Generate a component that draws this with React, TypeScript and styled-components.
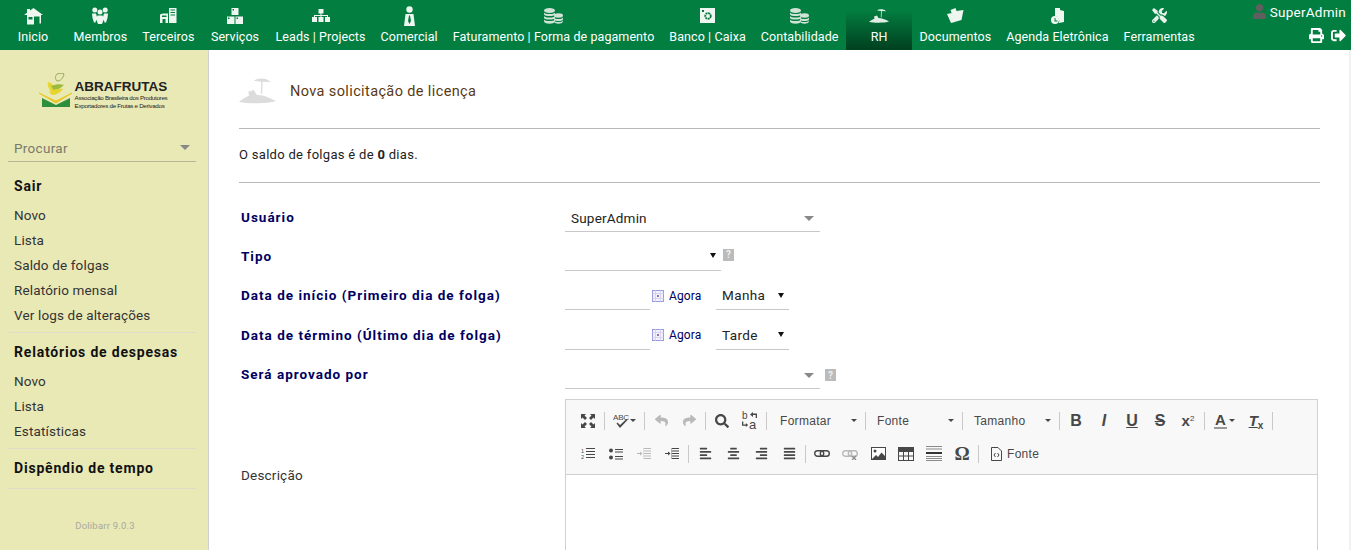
import React from 'react';
import styled, { createGlobalStyle } from 'styled-components';
import {
  FaAlignCenter, FaAlignJustify, FaAlignLeft, FaAlignRight, FaPrint, FaReply, FaSearch, FaShare,
  FaSignOutAlt, FaTools, FaUser,
} from 'react-icons/fa';

const GlobalStyle = createGlobalStyle`
  html, body { margin: 0; padding: 0; height: 100%; overflow: hidden; background: #fff; }
  body { font-family: Roboto, "Liberation Sans", sans-serif; font-size: 13px; color: #222; }
  #root { height: 100%; }
`;

const Page = styled.div`
  display: flex;
  flex-direction: column;
  height: 550px;
  width: 1351px;
  overflow: hidden;
`;

const TopBar = styled.header`
  display: flex;
  flex: none;
  height: 50px;
  background: #037e41;
`;

const NavItem = styled.a<{ $active?: boolean }>`
  display: flex;
  flex-direction: column;
  align-items: center;
  justify-content: flex-start;
  box-sizing: border-box;
  min-width: 66px;
  padding: 0 7.5px;
  color: #fff;
  white-space: nowrap;
  font-size: 12.5px;
  letter-spacing: 0.08px;
  background: ${(p) => (p.$active ? 'linear-gradient(to bottom, #037e41 0%, #037e41 20%, #00401f 100%)' : 'transparent')};
`;

const NavIcon = styled.div`
  height: 29px;
  display: flex;
  align-items: center;
  justify-content: center;
  padding-top: 2px;
  box-sizing: border-box;
  color: #e6f2ea;
`;

const UserBox = styled.div`
  margin-left: auto;
  margin-right: 5px;
  display: flex;
  flex-direction: column;
  align-items: flex-end;
  color: #fff;
`;

const UserName = styled.div`
  display: flex;
  align-items: center;
  gap: 3px;
  height: 27px;
  padding-bottom: 4px;
  box-sizing: border-box;
  font-size: 13.5px;
  letter-spacing: 0.25px;
  svg { color: #5f5f5f; }
`;

const UserTools = styled.div`
  display: flex;
  gap: 7px;
  align-items: center;
  font-size: 15px;
  height: 16px;
`;

const Body = styled.div`
  display: flex;
  flex: 1;
  min-height: 0;
`;

const Sidebar = styled.aside`
  flex: none;
  box-sizing: border-box;
  width: 209px;
  background: #e9e9b6;
  border-right: 1px solid #cfcfcf;
  padding: 0 12px 0 14px;
  display: flex;
  flex-direction: column;
`;

const LogoWrap = styled.div`
  display: flex;
  justify-content: center;
  height: 60px;
  padding-top: 23px;
  margin-bottom: 1px;
  margin-left: -4px;
`;

const LogoText = styled.div`
  display: flex;
  flex-direction: column;
  margin-left: 3px;
  color: #222;
  font-family: "Liberation Sans", sans-serif;
`;

const LogoTitle = styled.div`
  font-size: 13.5px;
  font-weight: 700;
  line-height: 14px;
  margin-top: 7px;
`;

const LogoSub = styled.div`
  font-size: 6.2px;
  line-height: 7.5px;
  white-space: nowrap;
  letter-spacing: -0.28px;
`;

const SearchBox = styled.div`
  display: flex;
  align-items: center;
  justify-content: space-between;
  height: 27px;
  margin-left: -6px;
  padding-left: 6px;
  padding-right: 6px;
  border-bottom: 1px solid #b5b59a;
  color: #7a7a6c;
  font-size: 13.5px;
  letter-spacing: 0.3px;
`;

const Caret = styled.span<{ $color?: string; $half?: number }>`
  width: 0;
  height: 0;
  border-left: ${(p) => p.$half || 5}px solid transparent;
  border-right: ${(p) => p.$half || 5}px solid transparent;
  border-top: 5px solid ${(p) => p.$color || '#888'};
`;

const MenuTitle = styled.div<{ $top: number }>`
  font-weight: 700;
  font-size: 14px;
  letter-spacing: 0.8px;
  color: #111;
  line-height: 18px;
  margin-top: ${(p) => p.$top}px;
`;

const MenuList = styled.div`
  display: flex;
  flex-direction: column;
  margin-top: 8px;
`;

const MenuLink = styled.a`
  height: 25px;
  line-height: 25px;
  font-size: 13.5px;
  letter-spacing: 0.15px;
  color: #333;
`;

const MenuRule = styled.div<{ $top: number }>`
  height: 1px;
  background: #dcdcc8;
  margin: ${(p) => p.$top}px 0 0 -6px;
`;

const Version = styled.div`
  text-align: center;
  margin-top: 31px;
  font-size: 9.5px;
  letter-spacing: 0.2px;
  color: #a8a8a0;
`;

const Main = styled.main`
  flex: 1;
  min-width: 0;
  padding: 0 29px 0 30px;
  border-right: 2px solid #f1f1f1;
`;

const TitleRow = styled.div`
  display: flex;
  align-items: center;
  gap: 14px;
  height: 79px;
  padding-top: 4px;
  box-sizing: border-box;
  border-bottom: 1px solid #b8b8b8;
`;

const Title = styled.h1`
  margin: 0;
  font-size: 14.5px;
  font-weight: 400;
  letter-spacing: 0.38px;
  color: #5a3a14;
`;

const Balance = styled.div`
  height: 53px;
  line-height: 52px;
  border-bottom: 1px solid #b8b8b8;
  font-size: 13px;
  letter-spacing: 0.3px;
  color: #222;
`;

const FormGrid = styled.div`
  display: grid;
  grid-template-columns: 326px 1fr;
  padding-top: 15.6px;
`;

const Label = styled.label`
  padding-left: 2px;
  height: 39.4px;
  line-height: 37px;
  font-weight: 700;
  font-size: 13.5px;
  letter-spacing: 1px;
  color: #000060;
`;

const Field = styled.div`
  height: 39.4px;
  display: flex;
  align-items: flex-start;
`;

const SelectBox = styled.div<{ $w: number; $native?: boolean }>`
  width: ${(p) => p.$w}px;
  height: 33px;
  box-sizing: border-box;
  border-bottom: 1px solid #c8c8c8;
  display: flex;
  align-items: center;
  justify-content: space-between;
  padding: ${(p) => (p.$native ? '4px 5px 0 6px' : '7px 6px 0')};
  font-size: 13.5px;
  letter-spacing: ${(p) => (p.$native ? '0.4px' : '0.2px')};
  color: #222;
`;

const DateInput = styled.div`
  width: 85px;
  height: 33px;
  box-sizing: border-box;
  border-bottom: 1px solid #c8c8c8;
`;

const NowLink = styled.a`
  display: flex;
  align-items: center;
  gap: 5px;
  height: 33px;
  margin-left: 2px;
  width: 64px;
  font-size: 12px;
  letter-spacing: 0.1px;
  color: #000060;
  padding-top: 4px;
  box-sizing: border-box;
`;

const HelpMark = styled.span<{ $top: number; $left: number }>`
  display: inline-flex;
  align-items: center;
  justify-content: center;
  width: 11px;
  height: 12px;
  margin: ${(p) => p.$top}px 0 0 ${(p) => p.$left}px;
  background: #bbb;
  color: #eee;
  font-size: 10px;
  font-weight: 700;
`;

const Editor = styled.div`
  width: 753px;
  margin-top: 3.6px;
  box-sizing: border-box;
  border: 1px solid #d1d1d1;
  height: 200px;
`;

const EditorLabel = styled.div`
  padding-left: 2px;
  padding-top: 71.4px;
  font-size: 13.5px;
  letter-spacing: 0.2px;
  color: #333;
`;

const Toolbar = styled.div`
  background: #f8f8f8;
  border-bottom: 1px solid #d1d1d1;
  height: 75px;
  box-sizing: border-box;
  padding: 4px 0 0 8px;
`;

const ToolRow = styled.div`
  display: flex;
  align-items: center;
  height: 33px;
`;

const ToolBtn = styled.span<{ $w?: number; $off?: boolean }>`
  flex: none;
  display: flex;
  align-items: center;
  justify-content: center;
  width: ${(p) => p.$w || 28}px;
  height: 26px;
  color: ${(p) => (p.$off ? '#b9b9b9' : '#474747')};
  font-size: 13px;
`;

const ToolSep = styled.span`
  flex: none;
  width: 1px;
  height: 18px;
  margin: 0 2px;
  background: #c9c9c9;
`;

const Combo = styled.span<{ $w: number; $pad: number }>`
  flex: none;
  box-sizing: border-box;
  display: flex;
  align-items: center;
  justify-content: space-between;
  width: ${(p) => p.$w}px;
  padding: 0 6px 0 ${(p) => p.$pad}px;
  font-family: "Liberation Sans", sans-serif;
  font-size: 12px;
  letter-spacing: 0.3px;
  color: #484848;
`;

const SmallCaret = styled.span`
  width: 0;
  height: 0;
  margin-left: 2px;
  border-left: 3px solid transparent;
  border-right: 3px solid transparent;
  border-top: 3px solid #474747;
`;

const StyleGlyph = styled.span<{ $kind: string }>`
  font-family: "Liberation Sans", sans-serif;
  font-size: 16px;
  line-height: 17px;
  font-weight: 700;
  font-style: ${(p) => (p.$kind === 'i' ? 'italic' : 'normal')};
  text-decoration: ${(p) => (p.$kind === 'u' ? 'underline' : p.$kind === 's' ? 'line-through' : 'none')};
`;

const SupGlyph = styled.span`
  font-family: "Liberation Sans", sans-serif;
  font-size: 15px;
  font-weight: 700;
  sup { font-size: 8px; font-weight: 400; vertical-align: 5px; line-height: 0; }
`;

const ColorGlyph = styled.span`
  font-family: "Liberation Sans", sans-serif;
  font-size: 15px;
  line-height: 15px;
  font-weight: 700;
  border-bottom: 2px solid #999;
  padding: 0 1px;
`;

const ClearGlyph = styled.span`
  font-family: "Liberation Sans", sans-serif;
  font-size: 15px;
  line-height: 15px;
  font-weight: 700;
  font-style: italic;
  text-decoration: underline;
  sub { font-size: 10px; font-style: normal; vertical-align: -3px; line-height: 0; display: inline-block; text-decoration: none; }
`;

const SourceBtn = styled.span`
  display: flex;
  align-items: center;
  gap: 5px;
  margin-left: 10px;
  font-family: "Liberation Sans", sans-serif;
  font-size: 12px;
  letter-spacing: 0.3px;
  color: #484848;
`;

const OmegaGlyph = styled.span`
  font-family: "Liberation Serif", serif;
  font-weight: 700;
  font-size: 19px;
`;

const iconFill = '#eef6f0';

const Home = () => (
  <svg width="19" height="18" viewBox="0 0 19 18" fill={iconFill}>
    <path fillRule="evenodd" d="M9.500 1L19 8h-2v8.500h-1.500V9.500H10v8H3V8H0l3-2.200V2h3v1.500zM4.500 10v2.500h4V10z" />
  </svg>
);
const People = () => (
  <svg width="18" height="17" viewBox="0 0 18 17" fill={iconFill}>
    <circle cx="3.800" cy="3" r="2.500" /><circle cx="9" cy="5" r="2.500" /><circle cx="14.200" cy="3" r="2.500" />
    <path d="M1 6.500h4L6 10l-1.500 5.500H3L1.500 11zM6.500 8.500h5L13 12l-2 5H7l-2-5zM13 6.500h4l-.5 4.500L15 15.500h-1.500L12 10z" />
  </svg>
);
const Buildings = () => (
  <svg width="17" height="15" viewBox="0 0 17 15" fill={iconFill}>
    <path fillRule="evenodd" d="M0 6.500l3-1h5V15H5.500v-4h-3v4H0zM2 7.500V9h4.500V7.500zM9 0h7.500v15H9zM10.500 1.500v1h4.500v-1zm0 2.500v1h4.500V4zm0 2.500v1h4.500v-1z" />
  </svg>
);
const Boxes = () => (
  <svg width="16" height="16" viewBox="0 0 16 16" fill={iconFill}>
    <path fillRule="evenodd" d="M4.500 0H11.500V7H4.500zM5.500 1v1.500H7V1zM0 8.500h7.500V16H0zM1 9.500V11h1.500V9.500zM8.500 8.500H16V16H8.500zM9.500 9.500V11H11V9.500z" />
  </svg>
);
const Hierarchy = () => (
  <svg width="18" height="13" viewBox="0 0 18 13" fill={iconFill}>
    <path d="M6.500 0h5v4.500h-5zM0 8h5v5H0zM6.500 8h5v5h-5zM13 8h5v5h-5z" />
    <path d="M8.500 4h1v2H16v2h-1V7H9.500v1h-1V7H3v1H2V6h6.500z" />
  </svg>
);
const Salesman = () => (
  <svg width="11" height="20" viewBox="0 0 11 20" fill={iconFill}>
    <circle cx="5.500" cy="3.500" r="3.200" />
    <path fillRule="evenodd" d="M1.500 8h8l1.500 12H0zM5 9.500L4 15l1.500 3L7 15 6 9.500z" />
  </svg>
);
const Coins = () => (
  <svg width="19" height="16" viewBox="0 0 19 16" fill="#cfe3d6">
    <ellipse cx="5.500" cy="2.500" rx="5.500" ry="2.500" />
    <path d="M0 4.500c1 2 10 2 11 0v2c-1 2-10 2-11 0zM0 8c1 2 10 2 11 0v2c-1 2-10 2-11 0zM0 11.500c1 2 10 2 11 0v2c-1 3-10 3-11 0z" />
    <ellipse cx="14.500" cy="7.500" rx="4.500" ry="2.200" />
    <path d="M10 9.500c1 2 8 2 9 0v2c-1 2-8 2-9 0zM10 12.500c1 2 8 2 9 0v1c-1 3-8 3-9 0z" />
  </svg>
);
const Safe = () => (
  <svg width="15" height="15" viewBox="0 0 15 15">
    <rect width="15" height="15" fill="#eef6f0" />
    <circle cx="8" cy="8" r="2.800" fill="none" stroke="#0a7a40" strokeWidth="1.800" strokeDasharray="2 .6" />
    <rect x="2" y="2" width="2" height="2" fill="#0a7a40" />
  </svg>
);
const Beach = ({ size = 1, color = '#dfeee5' }: { size?: number; color?: string }) => (
  <svg width={20 * size} height={14 * size} viewBox="0 0 20 14" fill={color}>
    <path d="M8 1.500C10 -.2 15 -.2 17 2.200L12.800 2 12.500 8.500 11.800 8.500 12 2z" />
    <path d="M0 13c2-2 4-2.500 5.500-3.500L5 7.500 8 6.500 9.500 9c3 0 7 1.500 10.500 3.500-4 1.500-14 1.500-20 .5z" />
  </svg>
);
const Folder = () => (
  <svg width="17" height="15" viewBox="0 0 17 15" fill={iconFill}>
    <path d="M0 6l5-1 3 9-4 1zM3.500 2l5-2 1 3 7-1-2 10-7 2z" />
  </svg>
);
const Agenda = () => (
  <svg width="13" height="16" viewBox="0 0 13 16" fill={iconFill}>
    <path d="M4 0h5v2l4 1v11l-5 1c1-3-1-7-4-7z" />
    <circle cx="4" cy="12" r="4" />
    <path d="M3.500 10h1v2.500h2v1h-3z" fill="#037e41" />
  </svg>
);
const LogoMark = () => (
  <svg width="33" height="35" viewBox="0 0 33 35">
    <path d="M18 1c4-1 6-1 7 0-1 5-4 7-7 7-2-2-2-5 0-7z" fill="none" stroke="#97a85a" />
    <path d="M9 9c4 1 6 3 8 9l-4 2C10 16 8 13 9 9z" fill="#e7d733" />
    <path d="M12 13c5-2 10-2 13-1-3 3-7 5-10 6z" fill="#9cbb3d" />
    <path d="M10 19c4-3 11-4 14-3-3 4-7 6-11 6z" fill="#e6d52f" />
    <path d="M0 20 L17 30 L33 20 L25 24 L17 28 L8 24z" fill="#e8c92a" stroke="#e8c92a" />
    <path d="M3 25l14 7 14-7v9H3z" fill="#2d8f3c" />
  </svg>
);
const Expand = () => (
  <svg width="14" height="14" viewBox="0 0 14 14" fill="#474747">
    <path d="M0 0h5L3.500 1.500 6 4 4 6 1.500 3.500 0 5zM14 0v5l-1.500-1.500L10 6 8 4l2.500-2.500L9 0zM0 14V9l1.500 1.500L4 8l2 2-2.500 2.500L5 14zM14 14H9l1.500-1.500L8 10l2-2 2.500 2.500L14 9z" />
  </svg>
);
const Spell = () => (
  <svg width="24" height="16" viewBox="0 0 24 16" fill="#474747">
    <text x="0" y="7" fontSize="8" fontFamily="Liberation Sans" letterSpacing="-.2">ABC</text>
    <path d="M3.500 10.500l1-1 2.500 2.500 6.500-6 1 1L7 15z" />
    <path d="M17 6h6l-3 3z" />
  </svg>
);
const Replace = () => (
  <svg width="16" height="23" viewBox="0 -2 16 23" fill="#474747">
    <text x="0" y="8" fontSize="10" fontFamily="Liberation Sans">b</text>
    <text x="7" y="17.500" fontSize="13" fontFamily="Liberation Sans">a</text>
    <path d="M8 3.500L11 1v1.500h4V7h-1.300V4h-2.700v2z" />
    <path d="M0 10.500h1.300v3h2.500V12l2.400 2-2.400 2v-1.300H0z" />
  </svg>
);
const NumList = () => (
  <svg width="14" height="13" viewBox="0 0 14 13" fill="#474747">
    <text x="0" y="5.500" fontSize="5.500" fontFamily="Liberation Sans">1</text>
    <text x="0" y="12" fontSize="5.500" fontFamily="Liberation Sans">2</text>
    <path d="M5 1h9v1H5zM5 4h9v1H5zM5 7h9v1H5zM5 10h9v1H5z" />
  </svg>
);
const BulList = () => (
  <svg width="14" height="12" viewBox="0 0 14 12" fill="#474747">
    <circle cx="2" cy="2.500" r="2" /><circle cx="2" cy="9.500" r="2" />
    <path d="M6 1h8v1H6zM6 3.500h8v1H6zM6 8h8v1H6zM6 10.500h8v1H6z" />
  </svg>
);
const Indent = ({ off }: { off?: boolean }) => (
  <svg width="14" height="12" viewBox="0 0 14 12" fill={off ? '#b9b9b9' : '#474747'}>
    <path d="M7 0h7v1H7zM7 2.500h7v1H7zM7 5h7v1H7zM7 7.500h7v1H7zM7 10h7v1H7z" />
    <path d="M0 5h3V3.500L5.500 5.500 3 7.500V6H0z" />
    <path d="M6 0h.8v11H6z" opacity=".5" />
  </svg>
);
const LinkIcon = ({ off }: { off?: boolean }) => (
  <svg width="16" height="12" viewBox="0 0 16 12" fill="none" stroke={off ? '#b9b9b9' : '#474747'} strokeWidth="1.400">
    <rect x=".7" y="2.700" width="9" height="5.600" rx="2.800" />
    <rect x="6.300" y="2.700" width="9" height="5.600" rx="2.800" />
    {off && <path d="M10 8l4 4M14 8l-4 4" stroke="#8f8f8f" />}
  </svg>
);
const ImageIcon = () => (
  <svg width="15" height="13" viewBox="0 0 15 13">
    <rect x=".5" y=".5" width="14" height="12" fill="#fff" stroke="#474747" />
    <circle cx="4" cy="4" r="1.500" fill="#474747" />
    <path d="M1 12l4-4 2 2 3.500-4.500L14 9v3z" fill="#474747" />
  </svg>
);
const TableIcon = () => (
  <svg width="16" height="14" viewBox="0 0 16 14" fill="#474747">
    <path d="M0 0h16v14H0zM1 5v3.500h4V5zm5 0v3.500h4V5zm5 0v3.500h4V5zM1 9.500V13h4V9.500zm5 0V13h4V9.500zm5 0V13h4V9.500z" fillRule="evenodd" />
  </svg>
);
const HrIcon = () => (
  <svg width="16" height="15" viewBox="0 0 16 15" fill="#8a8a8a">
    <path d="M0 0h16v1H0zM0 2.500h16v1H0z" />
    <path d="M0 6h16v2H0z" fill="#333" />
    <path d="M0 10h16v1H0zM0 12h16v1H0zM0 14h16v1H0z" />
  </svg>
);
const SourceIcon = () => (
  <svg width="11" height="14" viewBox="0 0 11 14" fill="none" stroke="#474747">
    <path d="M.5.500h6.500l3.500 3.500v9.500H.5z" />
    <path d="M4.500 6L3 8l1.500 2M6.500 6L8 8l-1.500 2" />
  </svg>
);
const CalendarIcon = () => (
  <svg width="12" height="12" viewBox="0 0 12 12">
    <rect x=".5" y=".5" width="11" height="11" fill="#f2f2ff" stroke="#9a9ae0" />
    <path d="M.5 3.500h11M.5 8.500h11M3.500.5v11M8.500.5v11" stroke="#d5d5f0" />
    <rect x="5" y="5" width="2" height="2" fill="#9a6ea8" />
  </svg>
);

const navItems: { label: string; icon: React.ReactNode; active?: boolean }[] = [
  { label: 'Inicio', icon: <Home /> },
  { label: 'Membros', icon: <People /> },
  { label: 'Terceiros', icon: <Buildings /> },
  { label: 'Serviços', icon: <Boxes /> },
  { label: 'Leads | Projects', icon: <Hierarchy /> },
  { label: 'Comercial', icon: <Salesman /> },
  { label: 'Faturamento | Forma de pagamento', icon: <Coins /> },
  { label: 'Banco | Caixa', icon: <Safe /> },
  { label: 'Contabilidade', icon: <Coins /> },
  { label: 'RH', icon: <Beach />, active: true },
  { label: 'Documentos', icon: <Folder /> },
  { label: 'Agenda Eletrônica', icon: <Agenda /> },
  { label: 'Ferramentas', icon: <FaTools size={15} /> },
];

export default function App() {
  return (
    <Page>
      <GlobalStyle />
      <TopBar>
        {navItems.map((n) => (
          <NavItem key={n.label} $active={n.active}>
            <NavIcon>{n.icon}</NavIcon>
            {n.label}
          </NavItem>
        ))}
        <UserBox>
          <UserName><FaUser size={15} />SuperAdmin</UserName>
          <UserTools><FaPrint /><FaSignOutAlt /></UserTools>
        </UserBox>
      </TopBar>
      <Body>
        <Sidebar>
          <LogoWrap>
            <LogoMark />
            <LogoText>
              <LogoTitle>ABRAFRUTAS</LogoTitle>
              <LogoSub>Associação Brasileira dos Produtores</LogoSub>
              <LogoSub>Exportadores de Frutas e Derivados</LogoSub>
            </LogoText>
          </LogoWrap>
          <SearchBox>Procurar<Caret /></SearchBox>
          <MenuTitle $top={15}>Sair</MenuTitle>
          <MenuList>
            <MenuLink>Novo</MenuLink>
            <MenuLink>Lista</MenuLink>
            <MenuLink>Saldo de folgas</MenuLink>
            <MenuLink>Relatório mensal</MenuLink>
            <MenuLink>Ver logs de alterações</MenuLink>
          </MenuList>
          <MenuRule $top={4} />
          <MenuTitle $top={10}>Relatórios de despesas</MenuTitle>
          <MenuList>
            <MenuLink>Novo</MenuLink>
            <MenuLink>Lista</MenuLink>
            <MenuLink>Estatísticas</MenuLink>
          </MenuList>
          <MenuRule $top={4} />
          <MenuTitle $top={10}>Dispêndio de tempo</MenuTitle>
          <MenuRule $top={11} />
          <Version>Dolibarr 9.0.3</Version>
        </Sidebar>
        <Main>
          <TitleRow>
            <Beach size={1.85} color="#dcdcdc" />
            <Title>Nova solicitação de licença</Title>
          </TitleRow>
          <Balance>O saldo de folgas é de <b>0</b> dias.</Balance>
          <FormGrid>
            <Label>Usuário</Label>
            <Field><SelectBox $w={255}>SuperAdmin<Caret /></SelectBox></Field>
            <Label>Tipo</Label>
            <Field>
              <SelectBox $w={156} $native><span /><Caret $color="#111" $half={3.5} /></SelectBox>
              <HelpMark $top={11} $left={2}>?</HelpMark>
            </Field>
            <Label>Data de início (Primeiro dia de folga)</Label>
            <Field>
              <DateInput />
              <NowLink><CalendarIcon />Agora</NowLink>
              <SelectBox $w={73} $native>Manha<Caret $color="#111" $half={3.5} /></SelectBox>
            </Field>
            <Label>Data de término (Último dia de folga)</Label>
            <Field>
              <DateInput />
              <NowLink><CalendarIcon />Agora</NowLink>
              <SelectBox $w={73} $native>Tarde<Caret $color="#111" $half={3.5} /></SelectBox>
            </Field>
            <Label>Será aprovado por</Label>
            <Field>
              <SelectBox $w={255}><span /><Caret /></SelectBox>
              <HelpMark $top={13} $left={5}>?</HelpMark>
            </Field>
            <EditorLabel>Descrição</EditorLabel>
            <Editor>
              <Toolbar>
                <ToolRow>
                  <ToolBtn><Expand /></ToolBtn>
                  <ToolSep />
                  <ToolBtn $w={35}><Spell /></ToolBtn>
                  <ToolSep />
                  <ToolBtn $off><FaReply /></ToolBtn>
                  <ToolBtn $off><FaShare /></ToolBtn>
                  <ToolSep />
                  <ToolBtn><FaSearch size={14} /></ToolBtn>
                  <ToolBtn><Replace /></ToolBtn>
                  <ToolSep />
                  <Combo $w={94} $pad={11}>Formatar<SmallCaret /></Combo>
                  <ToolSep />
                  <Combo $w={92} $pad={9}>Fonte<SmallCaret /></Combo>
                  <ToolSep />
                  <Combo $w={92} $pad={9}>Tamanho<SmallCaret /></Combo>
                  <ToolSep />
                  <ToolBtn><StyleGlyph $kind="b">B</StyleGlyph></ToolBtn>
                  <ToolBtn><StyleGlyph $kind="i">I</StyleGlyph></ToolBtn>
                  <ToolBtn><StyleGlyph $kind="u">U</StyleGlyph></ToolBtn>
                  <ToolBtn><StyleGlyph $kind="s">S</StyleGlyph></ToolBtn>
                  <ToolBtn><SupGlyph>x<sup>2</sup></SupGlyph></ToolBtn>
                  <ToolSep />
                  <ToolBtn $w={35}><ColorGlyph>A</ColorGlyph><SmallCaret /></ToolBtn>
                  <ToolBtn><ClearGlyph>T<sub>x</sub></ClearGlyph></ToolBtn>
                  <ToolSep />
                </ToolRow>
                <ToolRow>
                  <ToolBtn><NumList /></ToolBtn>
                  <ToolBtn><BulList /></ToolBtn>
                  <ToolBtn><Indent off /></ToolBtn>
                  <ToolBtn><Indent /></ToolBtn>
                  <ToolSep />
                  <ToolBtn><FaAlignLeft /></ToolBtn>
                  <ToolBtn><FaAlignCenter /></ToolBtn>
                  <ToolBtn><FaAlignRight /></ToolBtn>
                  <ToolBtn><FaAlignJustify /></ToolBtn>
                  <ToolSep />
                  <ToolBtn><LinkIcon /></ToolBtn>
                  <ToolBtn><LinkIcon off /></ToolBtn>
                  <ToolBtn><ImageIcon /></ToolBtn>
                  <ToolBtn><TableIcon /></ToolBtn>
                  <ToolBtn><HrIcon /></ToolBtn>
                  <ToolBtn><OmegaGlyph>Ω</OmegaGlyph></ToolBtn>
                  <ToolSep />
                  <SourceBtn><SourceIcon />Fonte</SourceBtn>
                </ToolRow>
              </Toolbar>
            </Editor>
          </FormGrid>
        </Main>
      </Body>
    </Page>
  );
}
